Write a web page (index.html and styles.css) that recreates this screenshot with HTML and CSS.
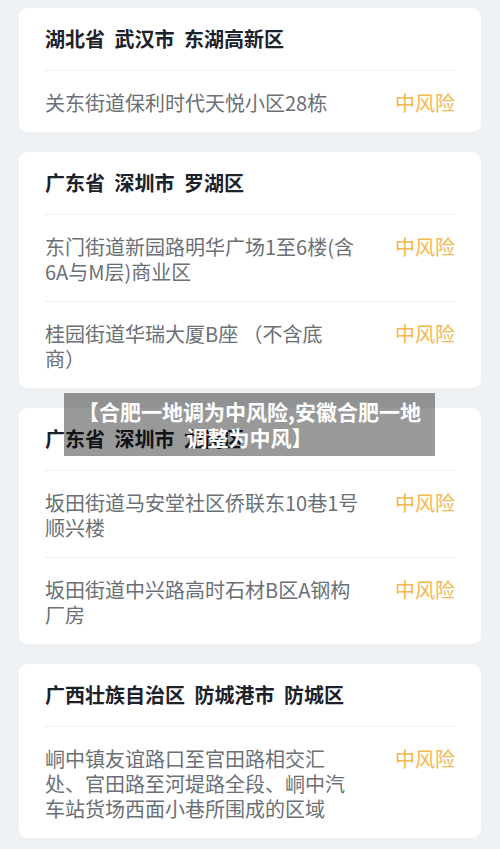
FILE: index.html
```html
<!DOCTYPE html>
<html lang="zh-CN">
<head>
    <meta charset="UTF-8">
    <meta name="viewport" content="width=device-width, initial-scale=1.0">
    <title>中风险地区</title>
    <link rel="stylesheet" href="styles.css">
</head>
<body>
    <div class="list">
        <div class="card">
            <div class="card-title">湖北省 武汉市 东湖高新区</div>
            <div class="row">
                <div class="addr">关东街道保利时代天悦小区28栋</div>
                <div class="risk">中风险</div>
            </div>
        </div>

        <div class="card">
            <div class="card-title">广东省 深圳市 罗湖区</div>
            <div class="row">
                <div class="addr">东门街道新园路明华广场1至6楼(含6A与M层)商业区</div>
                <div class="risk">中风险</div>
            </div>
            <div class="row">
                <div class="addr">桂园街道华瑞大厦B座 （不含底商）</div>
                <div class="risk">中风险</div>
            </div>
        </div>

        <div class="card">
            <div class="card-title">广东省 深圳市 龙岗区</div>
            <div class="row">
                <div class="addr">坂田街道马安堂社区侨联东10巷1号顺兴楼</div>
                <div class="risk">中风险</div>
            </div>
            <div class="row">
                <div class="addr">坂田街道中兴路高时石材B区A钢构厂房</div>
                <div class="risk">中风险</div>
            </div>
        </div>

        <div class="card">
            <div class="card-title">广西壮族自治区 防城港市 防城区</div>
            <div class="row">
                <div class="addr">峒中镇友谊路口至官田路相交汇处、官田路至河堤路全段、峒中汽车站货场西面小巷所围成的区域</div>
                <div class="risk">中风险</div>
            </div>
        </div>
    </div>

    <div class="caption">【合肥一地调为中风险,安徽合肥一地调整为中风】</div>
</body>
</html>
```

FILE: styles.css
```css
body {
    margin: 0;
    background: #eff2f5;
    font-family: "Noto Sans CJK SC", "Noto Sans", sans-serif;
}

.list {
    display: flex;
    flex-direction: column;
    gap: 20px;
    padding: 8px 19px;
}

.card {
    background: #ffffff;
    border-radius: 9px;
    padding: 0 26px;
}

.card-title {
    padding: 19px 0;
    line-height: 24px;
    font-size: 20px;
    font-weight: 700;
    word-spacing: 5px;
    color: #1d2129;
}

.row {
    display: flex;
    align-items: flex-start;
    gap: 35px;
    padding: 19px 0 17px;
    border-top: 1px solid #eceef1;
    font-size: 20px;
    line-height: 25px;
}

.addr {
    flex: 1;
    color: #6b6f76;
    text-spacing-trim: space-all;
}

.risk {
    width: 60px;
    color: #f2b850;
    white-space: nowrap;
}

.caption {
    position: absolute;
    top: 393px;
    left: 64px;
    width: 371px;
    height: 63px;
    box-sizing: border-box;
    padding: 5px 12px 0;
    background: rgba(0, 0, 0, 0.4);
    color: #ffffff;
    font-size: 21px;
    font-weight: 700;
    line-height: 26px;
    text-align: center;
}
```
